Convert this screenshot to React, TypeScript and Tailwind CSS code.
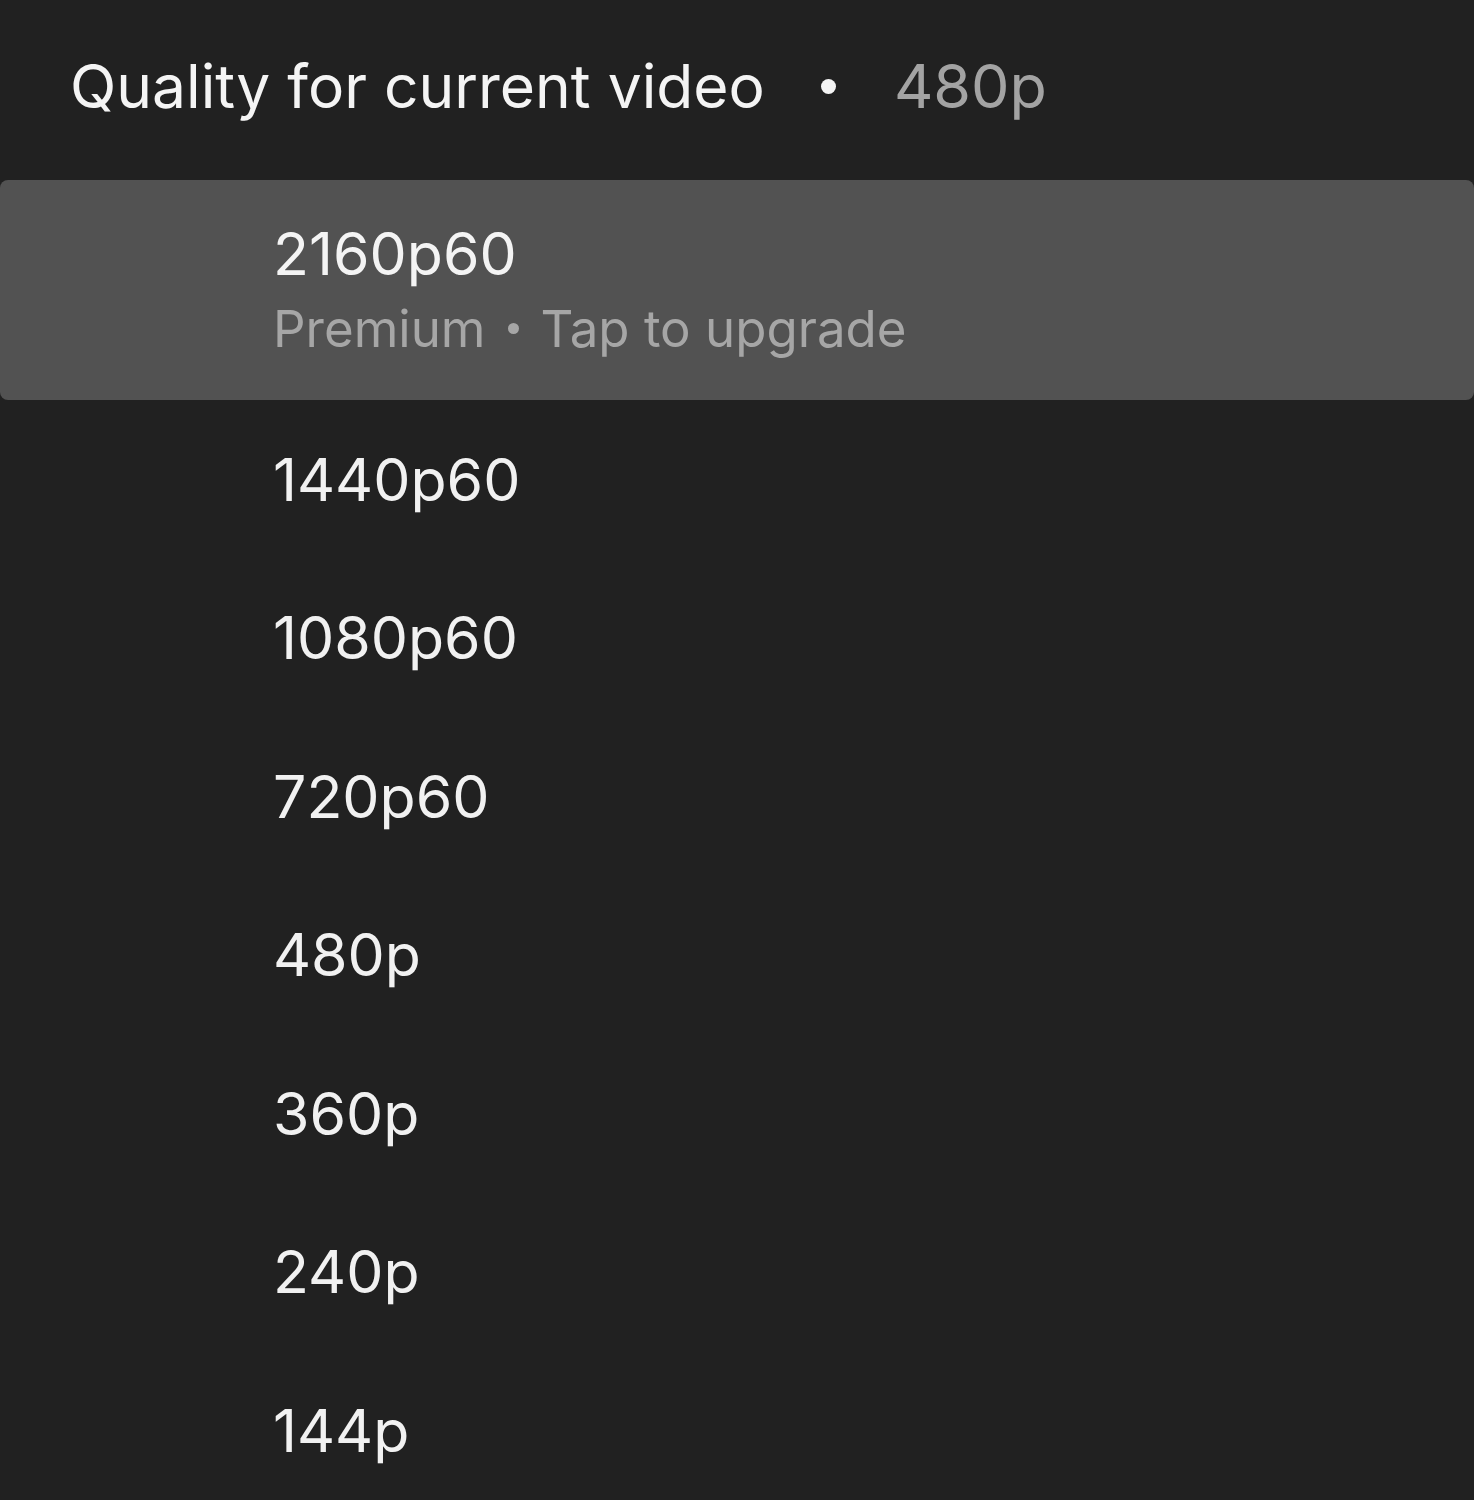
import React from 'react';

const QUALITIES = ['1440p60', '1080p60', '720p60', '480p', '360p', '240p', '144p'];

const QualityRow: React.FC<{ label: string }> = ({ label }) => (
    <div className="h-[158.5px] flex items-center pl-[273px]">
        <span className="text-[59px] leading-none text-[#f1f1f1]">{label}</span>
    </div>
);

const App: React.FC = () => {
    return (
        <div className="w-[1474px] h-[1500px] bg-[#212121] overflow-hidden" style={{ fontFamily: 'Inter, "Noto Sans", sans-serif' }}>
            <div className="h-[180px] flex items-center pl-[70px] pb-[8px]">
                <span className="text-[60.5px] leading-none text-[#f4f4f4]">Quality for current video</span>
                <span className="ml-[56px] mr-[58px] w-[15px] h-[15px] rounded-full bg-[#f4f4f4]" />
                <span className="text-[61px] leading-none text-[#a3a3a3]">480p</span>
            </div>
            <div className="h-[220px] bg-[#525252] rounded-[8px] flex flex-col justify-center pl-[273px] pb-[2px]">
                <span className="text-[59px] leading-none text-[#f4f4f4]">2160p60</span>
                <div className="mt-[20px] flex items-center text-[51px] leading-none text-[#a6a6a6]">
                    <span>Premium</span>
                    <span className="mx-[22px] w-[11px] h-[11px] rounded-full bg-[#a6a6a6]" />
                    <span>Tap to upgrade</span>
                </div>
            </div>
            {QUALITIES.map(q => (
                <QualityRow key={q} label={q} />
            ))}
        </div>
    );
};

export default App;
